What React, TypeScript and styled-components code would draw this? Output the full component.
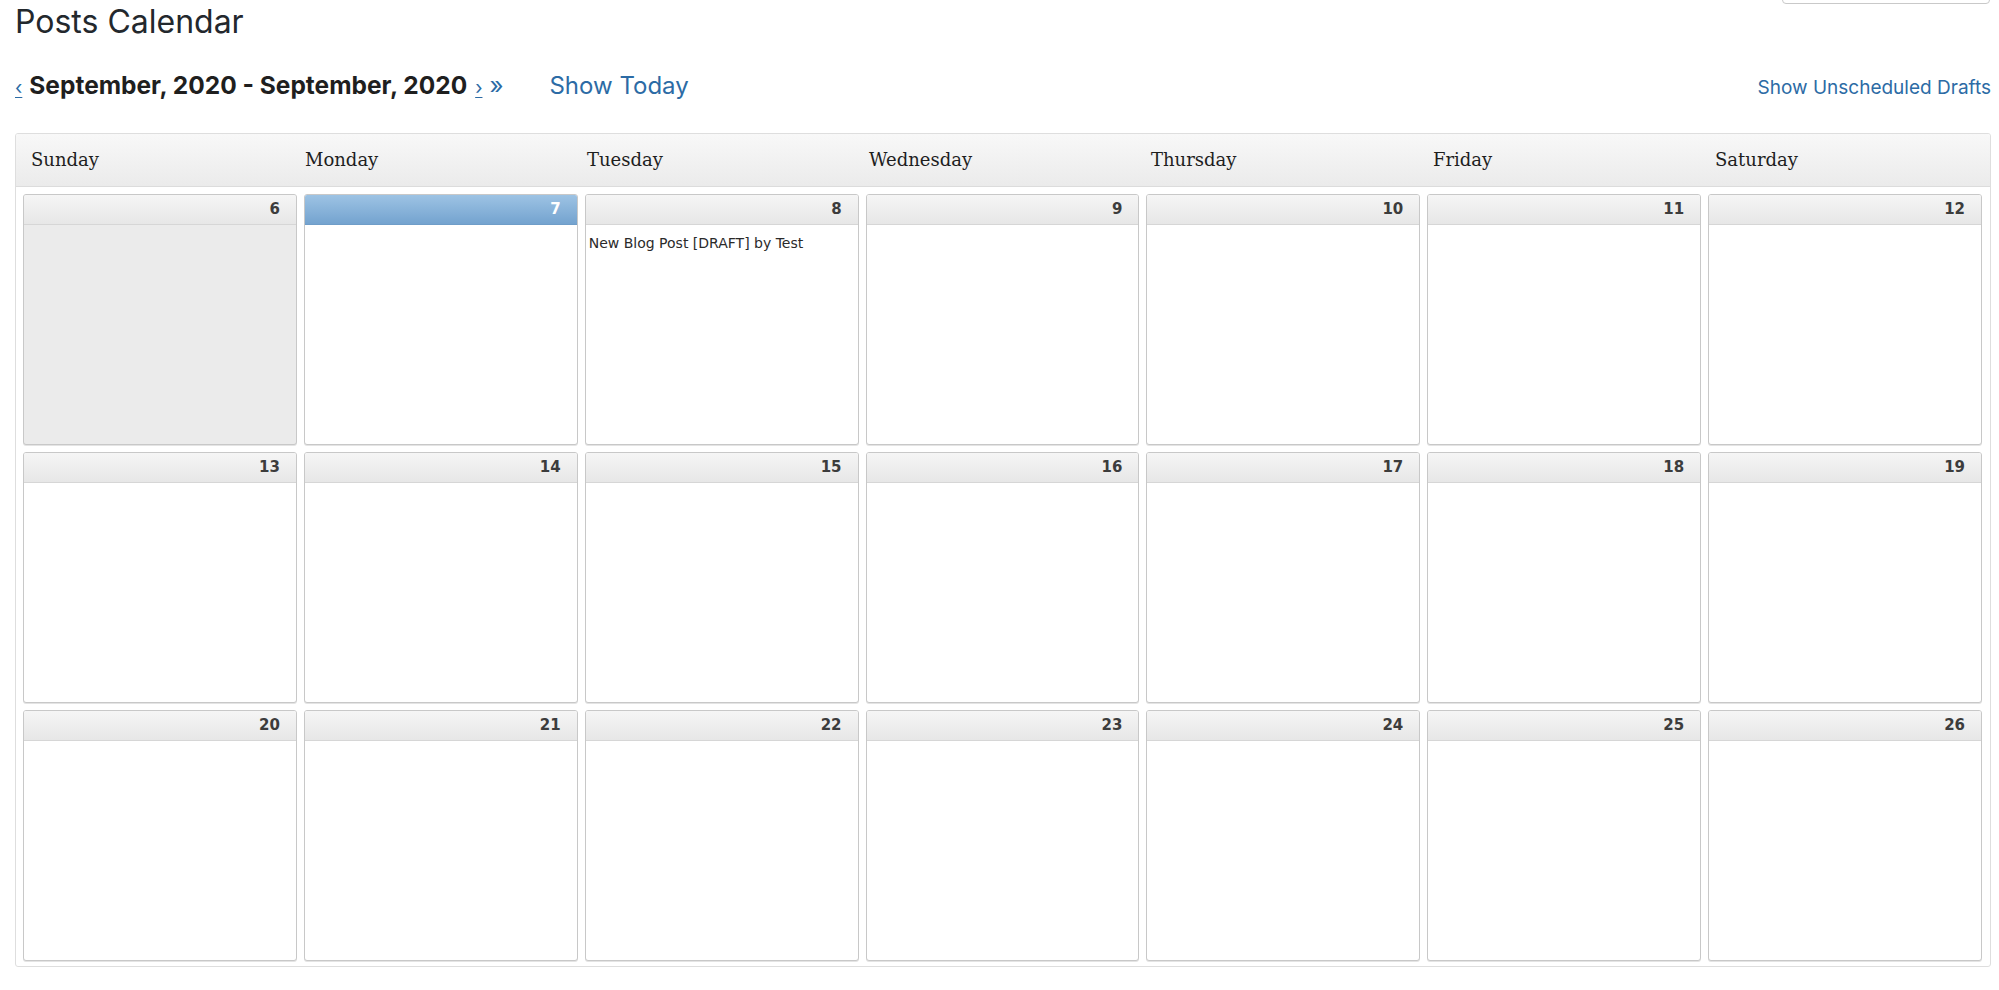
import React from "react";
import styled, { createGlobalStyle, css } from "styled-components";

const GlobalStyle = createGlobalStyle`
  html, body { margin: 0; padding: 0; background: #fff; }
  body { font-family: Inter, "Liberation Sans", sans-serif; color: #23282d; }
`;

const Page = styled.div`
  padding: 0 8px 0 15px;
`;

const TopRow = styled.div`
  display: flex;
  justify-content: space-between;
  align-items: flex-start;
`;

const Title = styled.h1`
  margin: 2px 0 0 0;
  font-family: Inter, "Liberation Sans", sans-serif;
  font-weight: 400;
  font-size: 32px;
  line-height: 40px;
  color: #23282d;
`;

const SearchStub = styled.div`
  width: 206px;
  height: 30px;
  margin-top: -28px;
  margin-right: 1px;
  border: 1px solid #c9c9c9;
  border-radius: 4px;
  background: #fff;
`;

const NavRow = styled.div`
  display: flex;
  align-items: baseline;
  justify-content: space-between;
  margin-top: 27px;
  line-height: 32px;
`;

const NavLeft = styled.div`
  display: flex;
  align-items: baseline;
`;

const Arrow = styled.a`
  font-size: 19px;
  color: #2c6ba5;
  text-decoration: underline;
  text-underline-offset: 3px;
`;

const Skip = styled.a`
  font-size: 24px;
  color: #2c6ba5;
  text-decoration: none;
  margin-left: 7px;
`;

const Range = styled.span`
  font-size: 24.5px;
  font-weight: 700;
  color: #1f1f1f;
  margin: 0 8px 0 7px;
`;

const TodayLink = styled.a`
  font-size: 24px;
  color: #2c6ba5;
  text-decoration: none;
  margin-left: 46px;
`;

const DraftsLink = styled.a`
  font-size: 19px;
  color: #2c6ba5;
  text-decoration: none;
`;

const Calendar = styled.div`
  margin-top: 29px;
  border: 1px solid #dedede;
  border-radius: 3px;
  overflow: hidden;
`;

const WeekHeader = styled.div`
  display: grid;
  grid-template-columns: repeat(7, 1fr);
  height: 52px;
  border-bottom: 1px solid #dcdcdc;
  background: linear-gradient(#f8f8f8, #ebebeb);
`;

const WeekDay = styled.div<{ $first?: boolean }>`
  font-family: "DejaVu Serif", Georgia, serif;
  font-size: 18px;
  color: #1e1e1e;
  line-height: 52px;
  padding-left: ${(p) => (p.$first ? "15px" : "7px")};
`;

const Grid = styled.div`
  display: grid;
  grid-template-columns: repeat(7, 1fr);
  grid-template-rows: repeat(3, 251px);
  gap: 7px;
  padding: 7px 8px 5px 7px;
`;

const Cell = styled.div<{ $past?: boolean }>`
  display: flex;
  flex-direction: column;
  border: 1px solid #c8c8c8;
  border-radius: 3px;
  box-shadow: 0 1px 0 #e4e4e4;
  background: ${(p) => (p.$past ? "#ebebeb" : "#fff")};
  overflow: hidden;
`;

const DayHead = styled.div<{ $today?: boolean }>`
  height: 29px;
  flex: none;
  text-align: right;
  padding-right: 16px;
  font-family: "DejaVu Sans", "Open Sans", sans-serif;
  font-weight: 700;
  font-size: 15px;
  line-height: 29px;
  ${(p) =>
    p.$today
      ? css`
          background: linear-gradient(#9dc3e4, #74a3cf);
          border-bottom: 1px solid #6f9dc8;
          color: #fff;
        `
      : css`
          background: linear-gradient(#f5f5f5, #e7e7e7);
          border-bottom: 1px solid #d6d6d6;
          color: #3c3c3c;
        `}
`;

const DayBody = styled.div`
  flex: 1;
  padding: 9px 3px;
`;

const Post = styled.div`
  font-family: "DejaVu Sans", "Open Sans", sans-serif;
  font-size: 14px;
  line-height: 18px;
  color: #2a2a2a;
`;

const days = ["Sunday", "Monday", "Tuesday", "Wednesday", "Thursday", "Friday", "Saturday"];

const posts: Record<number, string[]> = {
  8: ["New Blog Post [DRAFT] by Test"],
};

export default function App() {
  const dates = Array.from({ length: 21 }, (_, i) => 6 + i);
  return (
    <>
      <GlobalStyle />
      <Page>
        <TopRow>
          <Title>Posts Calendar</Title>
          <SearchStub />
        </TopRow>
        <NavRow>
          <NavLeft>
            <Arrow href="#">‹</Arrow>
            <Range>September, 2020 - September, 2020</Range>
            <Arrow href="#">›</Arrow>
            <Skip href="#">»</Skip>
            <TodayLink href="#">Show Today</TodayLink>
          </NavLeft>
          <DraftsLink href="#">Show Unscheduled Drafts</DraftsLink>
        </NavRow>
        <Calendar>
          <WeekHeader>
            {days.map((d, i) => (
              <WeekDay key={d} $first={i === 0}>
                {d}
              </WeekDay>
            ))}
          </WeekHeader>
          <Grid>
            {dates.map((n) => (
              <Cell key={n} $past={n === 6}>
                <DayHead $today={n === 7}>{n}</DayHead>
                <DayBody>
                  {(posts[n] || []).map((p) => (
                    <Post key={p}>{p}</Post>
                  ))}
                </DayBody>
              </Cell>
            ))}
          </Grid>
        </Calendar>
      </Page>
    </>
  );
}
